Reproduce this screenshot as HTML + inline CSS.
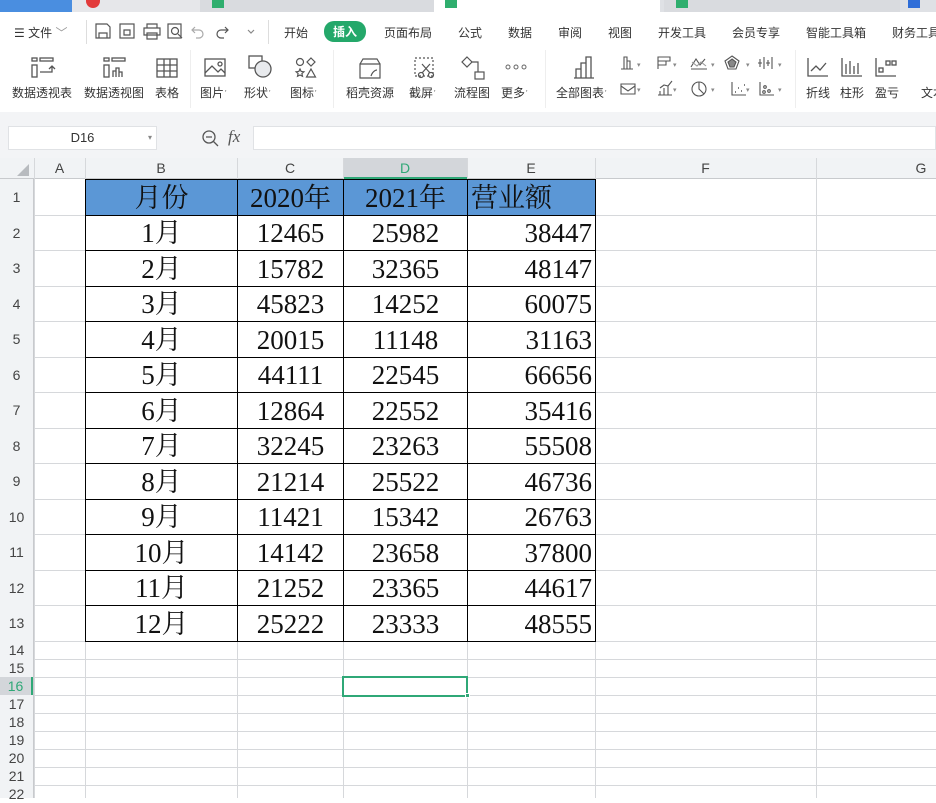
<!DOCTYPE html>
<html><head><meta charset="utf-8"><style>
*{margin:0;padding:0;box-sizing:border-box}
body{width:936px;height:798px;overflow:hidden;background:#fff;font-family:"Liberation Sans","Noto Sans CJK SC",sans-serif;position:relative;color:#333}
.a{position:absolute}
.tabs{left:0;top:0;width:936px;height:12px;background:#dfe1e5}
.menu{left:0;top:12px;width:936px;height:38px;background:#fff;font-size:12px}
.menu span{position:absolute;top:12px;white-space:nowrap}
.tb{left:0;top:50px;width:936px;height:62px;background:#fff}
.tb .l{position:absolute;top:34px;font-size:12px;color:#333;white-space:nowrap}
.fb{left:0;top:112px;width:936px;height:48px;background:#f3f4f6}
.ch{left:0;top:158px;width:936px;height:21px;background:#f1f3f5;border-bottom:1px solid #c8cacd;font-size:14px;color:#444}
.ch span{position:absolute;top:2px;text-align:center}
.rh{left:0;top:179px;width:34px;height:619px;background:#f1f3f5;border-right:1px solid #c8cacd;font-size:14px;color:#444}
.rh span{position:absolute;left:0;width:33px;text-align:center}
.vl{position:absolute;top:158px;width:1px;height:640px;background:#d6d8db}
.hl{position:absolute;left:34px;width:902px;height:1px;background:#d6d8db}
table{position:absolute;left:85px;top:179px;border-collapse:collapse;font-family:"Liberation Serif","Noto Serif CJK SC",serif;font-size:27px;color:#111}
td{border:1px solid #000;padding:0 3px;line-height:30px}
tr.h td{background:#5b97d6}
svg{position:absolute}
.cr{position:absolute;font-size:7px;color:#888}
</style></head><body>
<div class="a tabs">
 <div class="a" style="left:0;top:0;width:72px;height:12px;background:#4a8ee0"></div>
 <div class="a" style="left:72px;top:0;width:128px;height:12px;background:#e6e7ea"></div>
 <div class="a" style="left:86px;top:0;width:14px;height:8px;background:#e23b3b;border-radius:0 0 7px 7px"></div>
 <div class="a" style="left:200px;top:0;width:234px;height:12px;background:#d9dbdf"></div>
 <div class="a" style="left:212px;top:0;width:12px;height:8px;background:#2fae6e"></div>
 <div class="a" style="left:434px;top:0;width:226px;height:12px;background:#fff"></div>
 <div class="a" style="left:445px;top:0;width:12px;height:8px;background:#2fae6e"></div>
 <div class="a" style="left:664px;top:0;width:236px;height:12px;background:#d9dbdf"></div>
 <div class="a" style="left:676px;top:0;width:12px;height:8px;background:#2fae6e"></div>
 <div class="a" style="left:908px;top:0;width:12px;height:8px;background:#2f6ed8"></div>
</div>
<div class="a menu">
 <span style="left:14px">☰ 文件 <span style="position:static;color:#999">﹀</span></span>
 <div class="a" style="left:86px;top:8px;width:1px;height:24px;background:#ddd"></div>
 <svg style="left:95px;top:10px" width="160" height="18" fill="none" stroke="#555" stroke-width="1.2">
  <path d="M1 2h11l3 3v11H1zM4 16v-5h8v5"/>
  <rect x="25" y="2" width="14" height="14"/><path d="M29 8h6v5h-6z"/>
  <path d="M52 6V2h10v4M49 6h16v7H49zM52 11h10v6H52z"/>
  <rect x="73" y="2" width="13" height="14"/><circle cx="80" cy="9" r="3.5"/><path d="M83 12l4 4"/>
  <path d="M100 5l-3 3 3 3M97 8h7a4 4 0 010 8h-3" stroke="#aaa"/>
  <path d="M130 5l3 3-3 3M133 8h-7a4 4 0 000 8h3"/>
  <path d="M153 8l3 3 3-3" stroke="#888"/>
 </svg>
 <div class="a" style="left:268px;top:8px;width:1px;height:24px;background:#ddd"></div>
 <span style="left:284px">开始</span>
 <span style="left:324px;top:9px;background:#24a86a;color:#fff;border-radius:10px;padding:2px 9px;font-weight:bold">插入</span>
 <span style="left:384px">页面布局</span><span style="left:458px">公式</span><span style="left:508px">数据</span><span style="left:558px">审阅</span><span style="left:608px">视图</span><span style="left:658px">开发工具</span><span style="left:732px">会员专享</span><span style="left:806px">智能工具箱</span><span style="left:892px">财务工具</span>
</div>
<div class="a tb">
 <svg style="left:30px;top:6px" width="26" height="24" fill="none" stroke="#555" stroke-width="1.3"><rect x="2" y="2" width="5" height="3"/><rect x="10" y="2" width="13" height="3"/><rect x="2" y="9" width="5" height="12"/><path d="M10 16h12v-6M19 13l3-3 3 3"/></svg>
 <svg style="left:102px;top:6px" width="26" height="24" fill="none" stroke="#555" stroke-width="1.3"><rect x="2" y="2" width="5" height="3"/><rect x="10" y="2" width="13" height="3"/><rect x="2" y="9" width="5" height="12"/><path d="M11 21v-6h3v6M14 21v-9h3v9M17 21v-5h3v5"/></svg>
 <svg style="left:155px;top:6px" width="24" height="24" fill="none" stroke="#555" stroke-width="1.3"><rect x="2" y="3" width="20" height="18"/><path d="M2 9h20M2 15h20M9 3v18M15 3v18"/></svg>
 <svg style="left:203px;top:6px" width="24" height="24" fill="none" stroke="#555" stroke-width="1.3"><rect x="2" y="3" width="20" height="17"/><path d="M2 17l7-7 6 6 3-3 4 4"/><circle cx="17" cy="8" r="2"/></svg>
 <svg style="left:247px;top:4px" width="28" height="26" fill="none" stroke="#555" stroke-width="1.3"><rect x="2" y="2" width="13" height="12"/><circle cx="16" cy="15" r="8" fill="#e8eaed"/></svg>
 <svg style="left:294px;top:6px" width="24" height="24" fill="none" stroke="#555" stroke-width="1.2"><circle cx="6" cy="6" r="3.5"/><path d="M17 2l4 4-4 4-4-4z"/><path d="M6 13l1.2 2.5 2.7.3-2 1.8.6 2.7L6 19l-2.5 1.3.6-2.7-2-1.8 2.7-.3zM17 13l4.5 8h-9z"/></svg>
 <svg style="left:357px;top:6px" width="26" height="24" fill="none" stroke="#555" stroke-width="1.2"><path d="M3 8h20v14H3zM3 8l3-5h14l3 5"/><path d="M14 20c2-6 6-6 6-6"/></svg>
 <svg style="left:412px;top:6px" width="26" height="24" fill="none" stroke="#555" stroke-width="1.2"><rect x="3" y="2" width="18" height="18" stroke-dasharray="2 2"/><circle cx="9" cy="19" r="2.5"/><circle cx="19" cy="19" r="2.5"/><path d="M10 17l8-9M18 17l-8-9"/></svg>
 <svg style="left:460px;top:5px" width="26" height="26" fill="none" stroke="#555" stroke-width="1.2"><path d="M7 2l5 5-5 5-5-5z"/><rect x="15" y="17" width="9" height="7"/><path d="M12 7h6v10"/></svg>
 <svg style="left:505px;top:14px" width="24" height="6" fill="none" stroke="#666"><circle cx="3" cy="3" r="2"/><circle cx="11" cy="3" r="2"/><circle cx="19" cy="3" r="2"/></svg>
 <svg style="left:572px;top:4px" width="24" height="26" fill="none" stroke="#555" stroke-width="1.3"><path d="M2 24h20M4 24v-9h5v9M9 24V9h5v15M14 24V3h5v21"/></svg>
 <svg style="left:620px;top:4px" width="170" height="50" fill="none" stroke="#555" stroke-width="1.1">
  <path d="M4 15V3h3v12M7 15V7h3v8M1 15h12"/>
  <path d="M38 3h12v4H38zM38 7h8v4h-8zM38 3v12"/>
  <path d="M71 13l5-8 4 6 5-6M71 15h16"/><path d="M72 8l5 4 4-4 5 4" stroke="#999"/>
  <path d="M112 2l7 5-3 8h-8l-3-8z"/><path d="M112 5l4 3-2 5h-4l-2-5z" fill="#888"/>
  <path d="M140 5v8M144 3v12M148 6v6M152 3v12M138 9h4M146 9h4"/>
  <path d="M1 32l7 5 7-5M1 30h14v10H1z"/>
  <path d="M38 41h14M40 41v-4M44 41v-7M48 41v-9M40 34l4-3 4 1 4-5"/>
  <circle cx="79" cy="35" r="7"/><path d="M79 28v7l5 5"/>
  <path d="M112 28v13h14" /><path d="M115 38h1M118 34h1M121 37h1M124 31h1" stroke-width="1.6"/>
  <path d="M140 28v13h14"/><circle cx="145" cy="33" r="1.3"/><circle cx="149" cy="37" r="1.3"/><circle cx="144" cy="38" r="1.3"/>
 </svg>
 <span class="cr" style="left:637px;top:11px">▾</span><span class="cr" style="left:673px;top:11px">▾</span><span class="cr" style="left:711px;top:11px">▾</span><span class="cr" style="left:746px;top:11px">▾</span><span class="cr" style="left:778px;top:11px">▾</span>
 <span class="cr" style="left:637px;top:36px">▾</span><span class="cr" style="left:673px;top:36px">▾</span><span class="cr" style="left:711px;top:36px">▾</span><span class="cr" style="left:746px;top:36px">▾</span><span class="cr" style="left:778px;top:36px">▾</span>
 <svg style="left:806px;top:6px" width="24" height="22" fill="none" stroke="#555" stroke-width="1.3"><path d="M2 2v18h20M5 15l5-5 4 4 6-7"/></svg>
 <svg style="left:840px;top:6px" width="24" height="22" fill="none" stroke="#555" stroke-width="1.3"><path d="M2 2v18h20M6 18V8M10 18V5M14 18V10M18 18V7"/></svg>
 <svg style="left:874px;top:6px" width="24" height="22" fill="none" stroke="#555" stroke-width="1.3"><path d="M2 2v18h20"/><rect x="5" y="12" width="4" height="4"/><rect x="12" y="5" width="4" height="4"/><rect x="18" y="5" width="4" height="4"/></svg>
 <span class="l" style="left:12px">数据透视表</span><span class="l" style="left:84px">数据透视图</span><span class="l" style="left:155px">表格</span><span class="l" style="left:200px">图片ˑ</span><span class="l" style="left:244px">形状ˑ</span><span class="l" style="left:290px">图标ˑ</span><span class="l" style="left:346px">稻壳资源</span><span class="l" style="left:409px">截屏ˑ</span><span class="l" style="left:454px">流程图</span><span class="l" style="left:501px">更多ˑ</span><span class="l" style="left:556px">全部图表ˑ</span><span class="l" style="left:806px">折线</span><span class="l" style="left:840px">柱形</span><span class="l" style="left:875px">盈亏</span><span class="l" style="left:921px">文本</span>
 <div class="a" style="left:190px;top:0;width:1px;height:58px;background:#eee"></div>
 <div class="a" style="left:333px;top:0;width:1px;height:58px;background:#eee"></div>
 <div class="a" style="left:545px;top:0;width:1px;height:58px;background:#eee"></div>
 <div class="a" style="left:795px;top:0;width:1px;height:58px;background:#eee"></div>
</div>
<div class="a fb">
 <div class="a" style="left:8px;top:14px;width:149px;height:24px;background:#fff;border:1px solid #e0e2e5;font-size:13px;text-align:center;line-height:22px">D16 <span style="position:absolute;right:4px;font-size:8px;color:#888">▾</span></div>
 <svg style="left:202px;top:18px" width="18" height="18" fill="none" stroke="#555" stroke-width="1.3"><circle cx="7" cy="7" r="6"/><path d="M4 7h6M11 11l5 5"/></svg>
 <span class="a" style="left:228px;top:15px;font-family:'Liberation Serif',serif;font-style:italic;font-size:17px;color:#555">fx</span>
 <div class="a" style="left:253px;top:14px;width:683px;height:24px;background:#fff;border:1px solid #e0e2e5"></div>
</div>
<div class="a ch">
 <div class="a" style="left:343px;top:0;width:124px;height:21px;background:#d3d6da;border-bottom:2px solid #2fa877"></div>
 <svg style="left:16px;top:5px" width="14" height="14"><path d="M13 1v12H1z" fill="#b8bbbf"/></svg>
 <span style="left:34px;width:51px">A</span><span style="left:85px;width:152px">B</span><span style="left:237px;width:106px">C</span><span style="left:343px;width:124px;color:#2fa877">D</span><span style="left:467px;width:128px">E</span><span style="left:595px;width:221px">F</span><span style="left:816px;width:210px">G</span>
</div>
<div class="vl" style="left:34px"></div><div class="vl" style="left:85px"></div><div class="vl" style="left:237px"></div><div class="vl" style="left:343px"></div><div class="vl" style="left:467px"></div><div class="vl" style="left:595px"></div><div class="vl" style="left:816px"></div>
<div class="hl" style="top:215px"></div><div class="hl" style="top:250px"></div><div class="hl" style="top:286px"></div><div class="hl" style="top:321px"></div><div class="hl" style="top:357px"></div><div class="hl" style="top:392px"></div><div class="hl" style="top:428px"></div><div class="hl" style="top:463px"></div><div class="hl" style="top:499px"></div><div class="hl" style="top:534px"></div><div class="hl" style="top:570px"></div><div class="hl" style="top:605px"></div><div class="hl" style="top:641px"></div><div class="hl" style="top:659px"></div><div class="hl" style="top:677px"></div><div class="hl" style="top:695px"></div><div class="hl" style="top:713px"></div><div class="hl" style="top:731px"></div><div class="hl" style="top:749px"></div><div class="hl" style="top:767px"></div><div class="hl" style="top:785px"></div>
<div class="a rh">
 <span style="top:10px">1</span><span style="top:46px">2</span><span style="top:81px">3</span><span style="top:117px">4</span><span style="top:152px">5</span><span style="top:188px">6</span><span style="top:223px">7</span><span style="top:259px">8</span><span style="top:294px">9</span><span style="top:330px">10</span><span style="top:365px">11</span><span style="top:401px">12</span><span style="top:436px">13</span>
 <span style="top:462px;line-height:18px">14</span><span style="top:480px;line-height:18px">15</span><span style="top:498px;line-height:18px;background:#d3d6da;color:#2fa877;border-right:2px solid #2fa877">16</span><span style="top:516px;line-height:18px">17</span><span style="top:534px;line-height:18px">18</span><span style="top:552px;line-height:18px">19</span><span style="top:570px;line-height:18px">20</span><span style="top:588px;line-height:18px">21</span><span style="top:606px;line-height:18px">22</span>
</div>
<table>
<colgroup><col style="width:152px"><col style="width:106px"><col style="width:124px"><col style="width:128px"></colgroup>
<tr class="h" style="height:36px"><td align="center">月份</td><td align="center">2020年</td><td align="center">2021年</td><td align="left">营业额</td></tr>
<tr style="height:35px"><td align="center">1月</td><td align="center">12465</td><td align="center">25982</td><td align="right">38447</td></tr>
<tr style="height:36px"><td align="center">2月</td><td align="center">15782</td><td align="center">32365</td><td align="right">48147</td></tr>
<tr style="height:35px"><td align="center">3月</td><td align="center">45823</td><td align="center">14252</td><td align="right">60075</td></tr>
<tr style="height:36px"><td align="center">4月</td><td align="center">20015</td><td align="center">11148</td><td align="right">31163</td></tr>
<tr style="height:35px"><td align="center">5月</td><td align="center">44111</td><td align="center">22545</td><td align="right">66656</td></tr>
<tr style="height:36px"><td align="center">6月</td><td align="center">12864</td><td align="center">22552</td><td align="right">35416</td></tr>
<tr style="height:35px"><td align="center">7月</td><td align="center">32245</td><td align="center">23263</td><td align="right">55508</td></tr>
<tr style="height:36px"><td align="center">8月</td><td align="center">21214</td><td align="center">25522</td><td align="right">46736</td></tr>
<tr style="height:35px"><td align="center">9月</td><td align="center">11421</td><td align="center">15342</td><td align="right">26763</td></tr>
<tr style="height:36px"><td align="center">10月</td><td align="center">14142</td><td align="center">23658</td><td align="right">37800</td></tr>
<tr style="height:35px"><td align="center">11月</td><td align="center">21252</td><td align="center">23365</td><td align="right">44617</td></tr>
<tr style="height:36px"><td align="center">12月</td><td align="center">25222</td><td align="center">23333</td><td align="right">48555</td></tr>
</table>
<div class="a" style="left:342px;top:676px;width:126px;height:21px;border:2px solid #2fa877"></div>
<div class="a" style="left:465px;top:693px;width:5px;height:5px;background:#2fa877;border:1px solid #fff"></div>
</body></html>
